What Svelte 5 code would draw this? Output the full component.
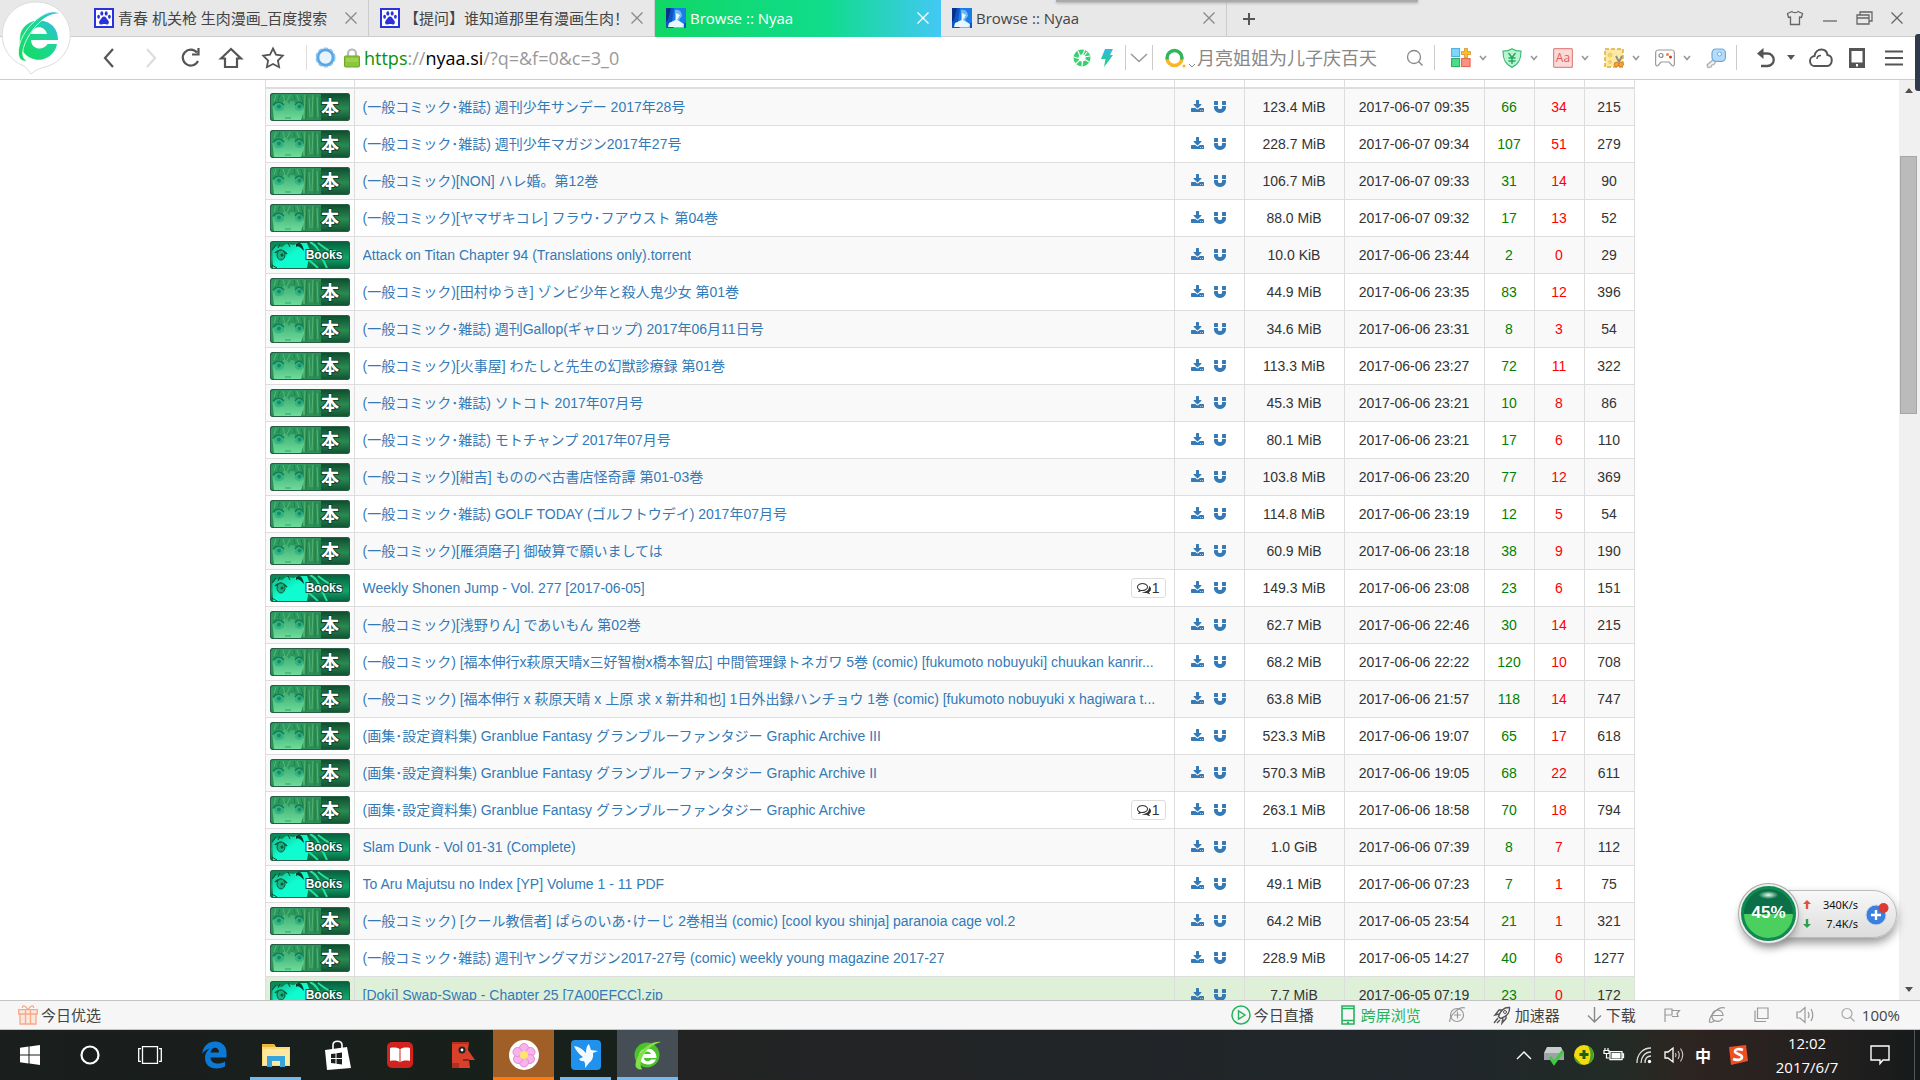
<script>
    // tabs along the top of the window
    const tabs = [
        { title: "青春 机关枪 生肉漫画_百度搜索", icon: "baidu" },
        { title: "【提问】谁知道那里有漫画生肉！", icon: "baidu" },
        { title: "Browse :: Nyaa", icon: "nyaa", active: true },
        { title: "Browse :: Nyaa", icon: "nyaa" },
    ];

    // [category, name, size, date, seeders, leechers, downloads, comments]
    const rows = [
        ["raw", "(一般コミック･雑誌) 週刊少年サンデー 2017年28号", "123.4 MiB", "2017-06-07 09:35", 66, 34, 215],
        ["raw", "(一般コミック･雑誌) 週刊少年マガジン2017年27号", "228.7 MiB", "2017-06-07 09:34", 107, 51, 279],
        ["raw", "(一般コミック)[NON] ハレ婚。第12巻", "106.7 MiB", "2017-06-07 09:33", 31, 14, 90],
        ["raw", "(一般コミック)[ヤマザキコレ] フラウ･フアウスト 第04巻", "88.0 MiB", "2017-06-07 09:32", 17, 13, 52],
        ["eng", "Attack on Titan Chapter 94 (Translations only).torrent", "10.0 KiB", "2017-06-06 23:44", 2, 0, 29],
        ["raw", "(一般コミック)[田村ゆうき] ゾンビ少年と殺人鬼少女 第01巻", "44.9 MiB", "2017-06-06 23:35", 83, 12, 396],
        ["raw", "(一般コミック･雑誌) 週刊Gallop(ギャロップ) 2017年06月11日号", "34.6 MiB", "2017-06-06 23:31", 8, 3, 54],
        ["raw", "(一般コミック)[火事屋] わたしと先生の幻獣診療録 第01巻", "113.3 MiB", "2017-06-06 23:27", 72, 11, 322],
        ["raw", "(一般コミック･雑誌) ソトコト 2017年07月号", "45.3 MiB", "2017-06-06 23:21", 10, 8, 86],
        ["raw", "(一般コミック･雑誌) モトチャンプ 2017年07月号", "80.1 MiB", "2017-06-06 23:21", 17, 6, 110],
        ["raw", "(一般コミック)[紺吉] もののべ古書店怪奇譚 第01-03巻", "103.8 MiB", "2017-06-06 23:20", 77, 12, 369],
        ["raw", "(一般コミック･雑誌) GOLF TODAY (ゴルフトウデイ) 2017年07月号", "114.8 MiB", "2017-06-06 23:19", 12, 5, 54],
        ["raw", "(一般コミック)[雁須磨子] 御破算で願いましては", "60.9 MiB", "2017-06-06 23:18", 38, 9, 190],
        ["eng", "Weekly Shonen Jump - Vol. 277 [2017-06-05]", "149.3 MiB", "2017-06-06 23:08", 23, 6, 151, 1],
        ["raw", "(一般コミック)[浅野りん] であいもん 第02巻", "62.7 MiB", "2017-06-06 22:46", 30, 14, 215],
        ["raw", "(一般コミック) [福本伸行x萩原天晴x三好智樹x橋本智広] 中間管理録トネガワ 5巻 (comic) [fukumoto nobuyuki] chuukan kanrir...", "68.2 MiB", "2017-06-06 22:22", 120, 10, 708],
        ["raw", "(一般コミック) [福本伸行 x 萩原天晴 x 上原 求 x 新井和也] 1日外出録ハンチョウ 1巻 (comic) [fukumoto nobuyuki x hagiwara t...", "63.8 MiB", "2017-06-06 21:57", 118, 14, 747],
        ["raw", "(画集･設定資料集) Granblue Fantasy グランブルーファンタジー Graphic Archive III", "523.3 MiB", "2017-06-06 19:07", 65, 17, 618],
        ["raw", "(画集･設定資料集) Granblue Fantasy グランブルーファンタジー Graphic Archive II", "570.3 MiB", "2017-06-06 19:05", 68, 22, 611],
        ["raw", "(画集･設定資料集) Granblue Fantasy グランブルーファンタジー Graphic Archive", "263.1 MiB", "2017-06-06 18:58", 70, 18, 794, 1],
        ["eng", "Slam Dunk - Vol 01-31 (Complete)", "1.0 GiB", "2017-06-06 07:39", 8, 7, 112],
        ["eng", "To Aru Majutsu no Index [YP] Volume 1 - 11 PDF", "49.1 MiB", "2017-06-06 07:23", 7, 1, 75],
        ["raw", "(一般コミック) [クール教信者] ぱらのいあ･けーじ 2巻相当 (comic) [cool kyou shinja] paranoia cage vol.2", "64.2 MiB", "2017-06-05 23:54", 21, 1, 321],
        ["raw", "(一般コミック･雑誌) 週刊ヤングマガジン2017-27号 (comic) weekly young magazine 2017-27", "228.9 MiB", "2017-06-05 14:27", 40, 6, 1277],
        ["eng", "[Doki] Swap-Swap - Chapter 25 [7A00EFCC].zip", "7.7 MiB", "2017-06-05 07:19", 23, 0, 172],
    ];

    let url = $state("https://nyaa.si/?q=&f=0&c=3_0");
    let keyword = $state("");
</script>

{#snippet favicon(name)}
    {#if name === "baidu"}
        <svg class="fav" viewBox="0 0 20 20">
            <rect x="1" y="1" width="18" height="18" fill="#fff" stroke="#2a32dc" stroke-width="2" />
            <g fill="#2a32dc">
                <ellipse cx="7.8" cy="5.4" rx="1.5" ry="2.2" />
                <ellipse cx="12.2" cy="5.4" rx="1.5" ry="2.2" />
                <ellipse cx="4.6" cy="8.8" rx="1.4" ry="2" />
                <ellipse cx="15.4" cy="8.8" rx="1.4" ry="2" />
                <path d="M10 8.5c2 0 2.400 2.200 3.800 3.400 1.800 1.600 1.400 4.600-1 4.600-1.200 0-1.800-.4-2.800-.4s-1.600.4-2.800.4c-2.400 0-2.800-3-1-4.600C7.600 10.700 8 8.500 10 8.500z" />
            </g>
        </svg>
    {:else}
        <svg class="fav" viewBox="0 0 20 20">
            <rect width="20" height="20" fill="#0c55c4" />
            <path d="M8 0h12v14l-5 3-3-5-6 2z" fill="#1b7be8" />
            <path d="M9 2c5-1 7 3 7 6l-3 4 5 5v3H8l-4-5 5-3z" fill="#6cbcf3" />
            <path d="M10 5l4 2-3 5 7 4-1 3H2l1-4 7-3z" fill="#e8f6ff" />
            <path d="M0 0h5L2 12 0 14z" fill="#06328c" />
        </svg>
    {/if}
{/snippet}

{#snippet cross()}
    <svg width="12" height="12" viewBox="0 0 12 12"><path d="M.5.5l11 11M11.500.5l-11 11" stroke="currentColor" fill="none" stroke-width="1.300" /></svg>
{/snippet}

{#snippet caret()}
    <svg width="8" height="6" viewBox="0 0 8 6"><path d="M1 1l3 3.500L7 1" fill="none" stroke="#999" stroke-width="1.600" /></svg>
{/snippet}

{#snippet banner(cat)}
    <svg class="banner" width="80" height="28" viewBox="0 0 80 28" role="img" aria-label="Literature">
        {#if cat === "raw"}
            <rect width="80" height="28" rx="3" fill="url(#rawBack)" />
            <path d="M1 1h50v26H1z" fill="#2c9159" />
            <path d="M2 10c6-3 26-3 30 0l2 8-3 9H4z" fill="url(#rawFace)" />
            <path d="M1 1h34l1 12-4-6-1 5-3-7-2 7-4-7-3 6-4-6-3 5-3-4-4 6-4 2z" fill="#2a9a60" />
            <path d="M35 2l-1 24M39 5l1 19M43 2l-1 22M47 4l1 20M33 14l1 12M6 2L4 8M13 2l2 7M20 2l-3 6M27 2l2 6" stroke="#78c878" fill="none" opacity=".6" />
            <path d="M37 2l-1 24M45 2v24M50 3v23M10 2l-2 5M24 2l1 5M31 2l2 8" stroke="#17733f" fill="none" opacity=".7" />
            <path d="M4 12q5-5 10 0v4q-5 4-9 1zM25 12q4-5 8 0v4q-4 4-8 0z" fill="#2eb183" opacity=".8" />
            <path d="M3 12q6-6 11 0M25 12q4-6 8 0" fill="none" stroke="#157a52" stroke-width="1.300" />
            <circle cx="9" cy="13.500" r="2" fill="#168c64" />
            <circle cx="29.500" cy="13.500" r="2" fill="#168c64" />
            <path d="M15 25h6" stroke="#2aa56b" />
            <text x="60" y="21" class="kanji" text-anchor="middle">本</text>
        {:else}
            <rect width="80" height="28" rx="3" fill="url(#engBack)" />
            <path d="M2 2h35l3 8-3 17H3z" fill="url(#engFace)" />
            <path d="M1 1h28l-5 3-8-1-4 3-6-1-5 6z" fill="#0a8a58" />
            <path d="M2 9l4-5M10 3l-2 4M18 2l2 4M2 24l5 3" stroke="#064b30" />
            <path d="M26 3q6-4 8 7l-3-3q-3-3-5-1z" fill="#063c28" />
            <path d="M5 12q6-6 12 1" fill="none" stroke="#07593a" stroke-width="1.500" />
            <ellipse cx="11" cy="14" rx="4" ry="5" fill="#19b083" stroke="#07593a" />
            <circle cx="12" cy="14" r="1.500" fill="#07593a" />
            <path d="M40 1c8 4 8 8 17 26M48 2c6 4 10 9 18 8M38 18l10 9" stroke="#27e0a0" stroke-width="2" fill="none" />
            <text x="54" y="18" class="books" text-anchor="middle">Books</text>
        {/if}
        <rect x=".5" y=".5" width="79" height="27" rx="3" fill="none" stroke="#2c5f48" />
    </svg>
{/snippet}

<svg class="defs" width="0" height="0">
    <defs>
        <linearGradient id="rawBack" x1="0" y1="0" x2="0" y2="1">
            <stop offset="0" stop-color="#0d4a2c" /><stop offset=".55" stop-color="#2a8a52" /><stop offset="1" stop-color="#0f5030" />
        </linearGradient>
        <linearGradient id="rawFace" x1="0" y1="0" x2="0" y2="1">
            <stop offset="0" stop-color="#3fae74" /><stop offset="1" stop-color="#6fdc9a" />
        </linearGradient>
        <linearGradient id="engBack" x1="0" y1="0" x2="0" y2="1">
            <stop offset="0" stop-color="#065c3c" /><stop offset=".6" stop-color="#10a568" /><stop offset="1" stop-color="#065c3c" />
        </linearGradient>
        <linearGradient id="engFace" x1="0" y1="0" x2="1" y2="1">
            <stop offset="0" stop-color="#14b985" /><stop offset=".5" stop-color="#0ffbd0" />
        </linearGradient>
        <linearGradient id="logo" x1="1" y1="0" x2="0" y2="1">
            <stop offset="0" stop-color="#36b5f0" /><stop offset=".35" stop-color="#1fd59a" /><stop offset="1" stop-color="#12dc5c" />
        </linearGradient>
        <linearGradient id="bolt" x1="0" y1="0" x2="0" y2="1">
            <stop offset="0" stop-color="#36b9e8" /><stop offset="1" stop-color="#18d46c" />
        </linearGradient>
        <linearGradient id="ring" x1="0" y1="0" x2="0" y2="1">
            <stop offset=".55" stop-color="#2fb65a" /><stop offset=".65" stop-color="#f8b62c" />
        </linearGradient>
    </defs>
</svg>

<div class="screen">
    <header class="tabbar">
        <nav class="tabs">
            {#each tabs as tab}
                <div class="tab" class:active={tab.active}>
                    {@render favicon(tab.icon)}
                    <span class="tab-title">{tab.title}</span>
                    <button class="close" aria-label="Close tab">{@render cross()}</button>
                </div>
            {/each}
            <button class="new-tab" aria-label="New tab">
                <svg width="14" height="14" viewBox="0 0 14 14"><path d="M7 1v12M1 7h12" stroke="#555" stroke-width="2" /></svg>
            </button>
        </nav>
        <div class="winbtns">
            <button aria-label="Skin"><svg width="18" height="16" viewBox="0 0 18 16"><path d="M6 1.500C7 3 11 3 12 1.500l4.500 2-1 4-2-.5V14.500h-9V7l-2 .5-1-4z" fill="none" stroke="#666" stroke-width="1.300" /></svg></button>
            <button aria-label="Minimize"><svg width="16" height="16" viewBox="0 0 16 16"><path d="M1 11h14" stroke="#666" stroke-width="1.300" /></svg></button>
            <button aria-label="Restore"><svg width="17" height="16" viewBox="0 0 17 16"><path d="M1 5h12v9H1zM1 8h12M4 5V2h12v9h-3" fill="none" stroke="#666" stroke-width="1.300" /></svg></button>
            <button aria-label="Close">{@render cross()}</button>
        </div>
    </header>

    <div class="logo">
        <svg width="68" height="74" viewBox="0 0 68 74">
            <path d="M34 1a33 33 0 0 1 6 65.500Q33 68 28 73q-4-6-7-8A33 33 0 0 1 34 1z" fill="#fff" stroke="#ddd" />
            <path d="M17 37a18 18 0 0 0 37 6h-9.500c-4 7-16 6-16.500-4h27C55 13 18 14 17 37zm11-4c2-9 14-9 16 0z" fill="url(#logo)" fill-rule="evenodd" />
            <path d="M57 13C46 4 20 25 16 46c-2 10 1 15 8 14-5-3-5-8-3-15C26 30 42 11 57 13z" fill="url(#logo)" stroke="#fff" stroke-width=".8" />
        </svg>
    </div>

    <div class="toolbar">
        <div class="nav">
            <button aria-label="Back"><svg width="20" height="22" viewBox="0 0 20 22"><path d="M14 2L6 11l8 9" fill="none" stroke="#555" stroke-width="2.200" /></svg></button>
            <button aria-label="Forward"><svg width="20" height="22" viewBox="0 0 20 22"><path d="M6 2l8 9-8 9" fill="none" stroke="#ddd" stroke-width="2.200" /></svg></button>
            <button aria-label="Reload"><svg width="24" height="22" viewBox="0 0 24 22"><path d="M18 5.500A8 8 0 1 0 19 14M19.500 1v6.500H13" fill="none" stroke="#555" stroke-width="2.200" /></svg></button>
            <button aria-label="Home"><svg width="24" height="22" viewBox="0 0 24 22"><path d="M2 11.500L12 2l10 9.500h-4V20H6v-8.500z" fill="none" stroke="#555" stroke-width="2.200" /></svg></button>
            <button aria-label="Bookmark"><svg width="24" height="22" viewBox="0 0 24 22"><path d="M12 1.500l3 6.200 6.800 1-4.900 4.800 1.200 6.700-6.100-3.200-6.100 3.200 1.200-6.700L2.200 8.700l6.800-1z" fill="none" stroke="#555" stroke-width="1.800" /></svg></button>
        </div>
        <i class="sep"></i>
        <form class="address">
            <svg width="21" height="21" viewBox="0 0 21 21"><circle cx="10.500" cy="10.500" r="7.700" fill="#e6f4fd" stroke="#5aa6e2" stroke-width="3" /><circle cx="10.500" cy="10.500" r="9.300" fill="none" stroke="#8cc6f2" stroke-width="1.500" stroke-dasharray="4 2" /></svg>
            <svg class="lock" width="16" height="20" viewBox="0 0 16 20"><path d="M4 9V5.500a4 4 0 0 1 8 0V9" fill="none" stroke="#b8b8b8" stroke-width="2.200" /><rect x=".5" y="8" width="15" height="11" rx="1" fill="#8cc63a" stroke="#6fa828" /><path d="M2 11h12M2 13h12" stroke="#aede66" /></svg>
            <label class="urlbox">
                <span class="url" aria-hidden="true"><b>https</b>://<em>nyaa.si</em>/?q=&amp;f=0&amp;c=3_0</span>
                <input class="url-input" aria-label="Address" bind:value={url} />
            </label>
            <svg class="aperture" width="18" height="18" viewBox="0 0 18 18"><circle cx="9" cy="9" r="6" fill="none" stroke="#3ccf70" stroke-width="5" /><path d="M5 2l2 5M12 .5L9.500 6M17 7l-6 1M16 13l-5-3M9 17.500L9.500 12M2.500 15L7 11M.5 8L6 9.500M14 3l-3 4" stroke="#fff" stroke-width="1.200" /><circle cx="9" cy="9" r="3.200" fill="#fff" /></svg>
            <svg width="12" height="18" viewBox="0 0 12 18"><path d="M4 0h8L9 6h3L3 18l1.500-8H0z" fill="url(#bolt)" /></svg>
        </form>
        <button class="drop" aria-label="History"><svg width="18" height="10" viewBox="0 0 18 10"><path d="M1 1l8 7.500L17 1" fill="none" stroke="#999" stroke-width="1.500" /></svg></button>
        <form class="search">
            <svg width="32" height="20" viewBox="0 0 32 20"><circle cx="9.500" cy="10" r="7.500" fill="none" stroke="url(#ring)" stroke-width="3.500" /><circle cx="19" cy="18" r="1.600" fill="#f8b62c" /><path d="M24 16l3 3 3-3" fill="none" stroke="#888" /></svg>
            <input aria-label="Search" placeholder="月亮姐姐为儿子庆百天" bind:value={keyword} />
            <svg width="18" height="18" viewBox="0 0 18 18"><circle cx="8" cy="8" r="6.500" fill="none" stroke="#888" stroke-width="1.300" /><path d="M12.500 12.500l4 4" stroke="#888" stroke-width="1.500" /></svg>
        </form>
        <div class="addons">
            <button aria-label="Extensions">
                <svg width="20" height="20" viewBox="0 0 20 20"><rect x=".6" y=".6" width="8" height="8" fill="#7fd6fb" stroke="#4aa9e0" /><rect x=".6" y="10.600" width="8" height="8" fill="#4fdc88" stroke="#21a85a" /><rect x="10.600" y="10.600" width="8.500" height="8" fill="#fb9180" stroke="#e3614f" /><path d="M13.500.5h3v3h3v3h-3v3h-3v-3h-3v-3h3z" fill="#fcc02e" stroke="#d98e1c" stroke-width=".8" /></svg>
                {@render caret()}
            </button>
            <button aria-label="Payment guard">
                <svg width="20" height="20" viewBox="0 0 20 20"><path d="M10 .7c3 2 6 2.500 9 2.500 0 8-2 13-9 16.200C3 16.200 1 11.200 1 3.200c3 0 6-.5 9-2.500z" fill="#b8f5cf" stroke="#3cba76" stroke-width="1.200" /><path d="M6.500 5l3.500 4.500L13.500 5M10 9.500V16M6.500 10h7M6.500 13h7" fill="none" stroke="#27a463" stroke-width="1.400" /></svg>
                {@render caret()}
            </button>
            <button aria-label="Translate">
                <svg width="20" height="20" viewBox="0 0 20 20"><rect x=".6" y=".6" width="18.800" height="18.800" rx="1" fill="#fdd8d4" stroke="#e08a86" stroke-width="1.200" /><text x="10" y="14" class="aa" text-anchor="middle">Aa</text></svg>
                {@render caret()}
            </button>
            <button aria-label="Screenshot">
                <svg width="20" height="20" viewBox="0 0 20 20"><rect x="1" y="1" width="18" height="18" fill="#fbe9a4" stroke="#e2ac38" stroke-width="1.500" stroke-dasharray="4 2" /><circle cx="6" cy="7" r="2.500" fill="#f3cf6a" /><circle cx="6" cy="14" r="2" fill="#f3cf6a" /><path d="M12 8l3 6M18 8l-3 6" stroke="#8f8a80" stroke-width="1.800" /><circle cx="12.500" cy="16.500" r="2.300" fill="#f7a23a" stroke="#d67f18" /><circle cx="17" cy="16.500" r="2.300" fill="#f7a23a" stroke="#d67f18" /></svg>
                {@render caret()}
            </button>
            <button aria-label="Games">
                <svg width="20" height="20" viewBox="0 0 20 20"><path d="M3 2h14q2 0 2.300 2l.1 12q-.2 2.500-2.400 1.500L14 14H6l-3 3.500Q.8 18.500.6 16L.7 4Q1 2 3 2z" fill="#fff" stroke="#9a9a9a" stroke-width="1.200" /><circle cx="6" cy="7.500" r="2" fill="none" stroke="#888" stroke-width="1.200" /><circle cx="12.500" cy="6.500" r="1.500" fill="#e8882a" /><circle cx="15.500" cy="9" r="1.500" fill="#d9382e" /></svg>
                {@render caret()}
            </button>
            <button class="last" aria-label="Password manager">
                <svg width="20" height="20" viewBox="0 0 20 20"><path d="M8 11l-7 6 1 2.500 3-.5 1-2 2-.5 2-3.500" fill="#eee" stroke="#aaa" stroke-width="1.200" /><rect x="6" y="1" width="13.400" height="12.400" rx="4" fill="#b4dcf8" stroke="#6fa9dc" stroke-width="1.200" /><circle cx="13.500" cy="6" r="2" fill="#fff" stroke="#6fa9dc" /></svg>
            </button>
        </div>
        <div class="tools">
            <button aria-label="Undo close"><svg width="18" height="20" viewBox="0 0 18 20"><path d="M4 5.500h6.500a6 6 0 0 1 0 12.500H4" fill="none" stroke="#555" stroke-width="2.300" /><path d="M0 5.500L6.500 0v11z" fill="#555" /></svg></button>
            <button aria-label="More closed tabs"><svg width="8" height="5" viewBox="0 0 8 5"><path d="M0 0h8L4 5z" fill="#555" /></svg></button>
            <button aria-label="Cloud"><svg width="24" height="20" viewBox="0 0 24 20"><path d="M6.500 18a5 5 0 0 1-1-10C6 4 9 1.500 12.500 1.500c3.500 0 5.500 2.500 6 5.500 6 .5 5.500 10.500-.5 11z" fill="none" stroke="#555" stroke-width="2" /><path d="M12 7.500c-2 0-4 1-4 3.500" fill="none" stroke="#555" stroke-width="1.500" /></svg></button>
            <button aria-label="Phone"><svg width="16" height="20" viewBox="0 0 16 20"><path d="M0 0h16v20H0zM2.500 3v11.500h11V3zM7 16v2.500h2V16z" fill="#555" fill-rule="evenodd" /></svg></button>
            <button aria-label="Menu"><svg width="18" height="16" viewBox="0 0 18 16"><path d="M0 1.500h18M0 8h18M0 14.500h18" stroke="#555" stroke-width="2.200" /></svg></button>
        </div>
    </div>

    <main class="page">
        <div class="view">
            <table>
                <colgroup>
                    <col class="c-cat" /><col /><col class="c-link" /><col class="c-size" /><col class="c-date" /><col class="c-num" /><col class="c-num" /><col class="c-num" />
                </colgroup>
                <thead>
                    <tr>{#each Array(8) as _}<th></th>{/each}</tr>
                </thead>
                <tbody>
                    {#each rows as [cat, name, size, date, seeders, leechers, downloads, comments], i}
                        <tr class:success={i === rows.length - 1}>
                            <td class="cat"><a href="#cat" aria-label="Category">{@render banner(cat)}</a></td>
                            <td class="name">
                                <div class="name-line">
                                    <a href="#view">{name}</a>
                                    {#if comments}
                                        <a class="comments" href="#comments">
                                            <svg width="14" height="14" viewBox="0 0 1792 1792"><path fill="#333" d="M704 384q-153 0-286 52t-211.500 141-78.500 191q0 82 53 158t149 132l97 56-35 84q34-20 62-39l44-31 53 10q78 14 153 14 153 0 286-52t211.500-141 78.500-191-78.500-191-211.500-141-286-52zm0-128q191 0 353.500 68.500t256.500 186.500 94 257-94 257-256.500 186.500-353.500 68.500q-86 0-176-16-124 88-278 128-36 9-86 16h-3q-11 0-20.500-8t-11.500-21q-1-3-1-6.500t.5-6.500 2-6l2.500-5 3.500-5.500 4-5 4.500-5 4-4.500q5-6 23-25t26-29.500 22.500-29 25-38.500 20.500-44q-124-72-195-177t-71-224q0-139 94-257t256.500-186.500 353.500-68.500zm822 1169q10 24 20.500 44t25 38.500 22.500 29 26 29.500 23 25q1 1 4 4.500t4.500 5 4 5 3.500 5.500l2.500 5 2 6 .5 6.500-1 6.500q-3 14-13 22t-22 7q-50-7-86-16-154-40-278-128-90 16-176 16-271 0-472-132 58 4 88 4 161 0 309-45t264-129q125-92 192-212t67-254q0-77-23-152 129 71 204 178t75 230q0 120-71 224.500t-195 176.500z" /></svg>{comments}
                                        </a>
                                    {/if}
                                </div>
                            </td>
                            <td>
                                <div class="links">
                                    <a href="#download" aria-label="Download"><svg width="14" height="14" viewBox="0 0 1792 1792"><path fill="currentColor" d="M1280 1344q0-26-19-45t-45-19-45 19-19 45 19 45 45 19 45-19 19-45zm256 0q0-26-19-45t-45-19-45 19-19 45 19 45 45 19 45-19 19-45zm128-224v320q0 40-28 68t-68 28h-1472q-40 0-68-28t-28-68v-320q0-40 28-68t68-28h465l135 136q58 56 136 56t136-56l136-136h464q40 0 68 28t28 68zm-325-569q17 41-14 70l-448 448q-18 19-45 19t-45-19l-448-448q-31-29-14-70 17-39 59-39h256v-448q0-26 19-45t45-19h256q26 0 45 19t19 45v448h256q42 0 59 39z" /></svg></a>
                                    <a href="#magnet" aria-label="Magnet"><svg width="14" height="14" viewBox="0 0 1792 1792"><path fill="currentColor" d="M1664 832v128q0 201-98.500 362t-274 251.500-395.500 90.500-395.500-90.500-274-251.500-98.500-362v-128q0-26 19-45t45-19h384q26 0 45 19t19 45v128q0 52 23.500 90t53.500 57 71 30 64 13 44 2 44-2 64-13 71-30 53.500-57 23.500-90v-128q0-26 19-45t45-19h384q26 0 45 19t19 45zm-1024-640v384q0 26-19 45t-45 19h-384q-26 0-45-19t-19-45v-384q0-26 19-45t45-19h384q26 0 45 19t19 45zm1024 0v384q0 26-19 45t-45 19h-384q-26 0-45-19t-19-45v-384q0-26 19-45t45-19h384q26 0 45 19t19 45z" /></svg></a>
                                </div>
                            </td>
                            <td>{size}</td>
                            <td>{date}</td>
                            <td class="seed">{seeders}</td>
                            <td class="leech">{leechers}</td>
                            <td>{downloads}</td>
                        </tr>
                    {/each}
                </tbody>
            </table>
        </div>
        <div class="scrollbar">
            <svg width="8" height="5" viewBox="0 0 8 5"><path d="M0 5h8L4 0z" fill="#505050" /></svg>
            <div class="track"><div class="thumb"></div></div>
            <svg width="8" height="5" viewBox="0 0 8 5"><path d="M0 0h8L4 5z" fill="#505050" /></svg>
        </div>
    </main>

    <footer class="status">
        <button class="gift">
            <svg width="20" height="20" viewBox="0 0 20 20"><path d="M2 9v10h16V9M.7 4.700h18.600V9H.7zM7.500 5v14M12.500 5v14" fill="#fde6da" stroke="#f6a98a" stroke-width="1.300" /><path d="M10 4.500C7 0 4 0 4.500 3M10 4.500C13 0 16 0 15.500 3" fill="none" stroke="#f6a98a" stroke-width="1.300" /></svg>
            今日优选
        </button>
        <div class="status-right">
            <button class="live"><svg width="20" height="20" viewBox="0 0 20 20"><circle cx="10" cy="10" r="9" fill="none" stroke="#25b45e" stroke-width="1.500" /><path d="M7.500 5.800l6.500 4.200-6.500 4.200z" fill="none" stroke="#25b45e" stroke-width="1.400" /></svg>今日直播</button>
            <button class="cross-screen"><svg width="14" height="20" viewBox="0 0 14 20"><path d="M1 1h12v18H1zM1 3.500h12M1 15.500h12M6 17.500h2" fill="none" stroke="#25b45e" stroke-width="1.600" /></svg>跨屏浏览</button>
            <button aria-label="Compatibility"><svg width="18" height="18" viewBox="0 0 18 18"><circle cx="9" cy="9" r="6.500" fill="none" stroke="#999" stroke-width="1.200" /><path d="M17 2C11 0 2 9 1.500 16M9.500 5.500v7M6 9h7" fill="none" stroke="#999" stroke-width="1.200" /></svg></button>
            <button><svg width="18" height="18" viewBox="0 0 18 18"><path d="M16.500 1.500C10 1 7 6 5.500 10.500l2 2C12 11 17 8 16.500 1.500zM6 8L2 9l4-5h3M10 12l-1 5 4-4.500V9M5 12l-4 5M7 14l-3 3" fill="none" stroke="#555" stroke-width="1.400" /><circle cx="12" cy="6" r="1.500" fill="none" stroke="#555" /></svg>加速器</button>
            <button><svg width="15" height="18" viewBox="0 0 15 18"><path d="M7.500 1v15M1 9.500l6.500 6.500L14 9.500" fill="none" stroke="#888" stroke-width="1.400" /></svg>下载</button>
            <button aria-label="Flag"><svg width="18" height="18" viewBox="0 0 18 18"><path d="M2 16V3h7v6H2M9 4.500h7.500L14 7.500l1 3H9" fill="none" stroke="#999" stroke-width="1.200" /></svg></button>
            <button aria-label="Engine"><svg width="18" height="18" viewBox="0 0 18 18"><path d="M4.500 9.500H15C15 2 4 2.500 4 10c0 6 8 7 10.500 2.500M17 2C10 0 1 10 1.500 16c2 1 4-.5 5-1" fill="none" stroke="#999" stroke-width="1.200" /></svg></button>
            <button aria-label="Side by side"><svg width="16" height="16" viewBox="0 0 16 16"><path d="M4.500 1h10.500v10.500H4.500zM2 3.500v11h11" fill="none" stroke="#999" stroke-width="1.200" /></svg></button>
            <button aria-label="Mute"><svg width="18" height="18" viewBox="0 0 18 18"><path d="M1 6h3l5-4.500v15L4 12H1zM12 6q2 3 0 6M15 3q3.500 6 0 12" fill="none" stroke="#999" stroke-width="1.200" /></svg></button>
            <button class="zoom"><svg width="14" height="16" viewBox="0 0 14 16"><circle cx="6" cy="6.500" r="5" fill="none" stroke="#aaa" stroke-width="1.200" /><path d="M9.500 10.500l4 4" stroke="#aaa" stroke-width="1.200" /></svg>100%</button>
        </div>
    </footer>

    <div class="taskbar">
        <button class="sys" aria-label="Start"><svg width="20" height="20" viewBox="0 0 20 20"><path d="M0 2.800l8.500-1.200v7.900H0zM9.500 1.500L20 0v9.500H9.500zM0 10.500h8.500v7.900L0 17.200zM9.500 10.500H20V20L9.500 18.500z" fill="#fff" /></svg></button>
        <button class="sys" aria-label="Cortana"><svg width="20" height="20" viewBox="0 0 20 20"><circle cx="10" cy="10" r="8.500" fill="none" stroke="#fff" stroke-width="2.200" /></svg></button>
        <button class="sys" aria-label="Task view"><svg width="24" height="18" viewBox="0 0 24 18"><path d="M4.500 .7h15v16.600h-15zM3 2.700H.7v12.600H3M21 2.700h2.300v12.600H21" fill="none" stroke="#fff" stroke-width="1.300" /></svg></button>
        <div class="apps">
            <button aria-label="Edge"><svg width="26" height="28" viewBox="0 0 26 28"><path d="M1 13C2.500 4 8 .5 14 .5c8 0 12 6 11.500 12v4H9.500c.5 7 9 7.500 14.500 4v5c-8 4-20 2.500-20-9 0-4 2-7 5-9-4 1-6.500 3-8 5.500zM9.600 11.500H18c0-6.500-8-6-8.400 0z" fill="#0a7ad6" fill-rule="evenodd" /></svg></button>
            <button class="open" aria-label="Explorer"><svg width="28" height="24" viewBox="0 0 28 24"><path d="M0 1h12l2 3h14v19H0z" fill="#fcd975" /><path d="M0 1h12l1 3H0z" fill="#e8b83a" /><path d="M1 6h26v16H1z" fill="#ffe9a0" /><path d="M5 24V13h18v11h-5v-6h-8v6z" fill="#38a4dc" /></svg></button>
            <button aria-label="Store"><svg width="26" height="30" viewBox="0 0 26 30"><path d="M8 9V5c0-5 9-5 9 0v4" fill="none" stroke="#fff" stroke-width="1.600" /><path d="M0 10l22-3 4 21-24 2z" fill="#fff" /><path d="M6 14l4.500-.6V18H6zM11.500 13.300L17 12.500V18h-5.500zM6 19h4.500v4.600L6 23zM11.500 19H17v5.500l-5.500-.8z" fill="#1b1f1d" /></svg></button>
            <button aria-label="Dictionary"><svg width="26" height="26" viewBox="0 0 26 26"><rect width="26" height="26" rx="5" fill="#d3231f" /><path d="M3 6c4-1 8-.5 10 1.500C15 5.500 19 5 23 6v13c-4-1-8-.5-10 1.500C11 18.500 7 18 3 19z" fill="#fff" /><path d="M13 7.500v13" stroke="#d3231f" /></svg></button>
            <button aria-label="Reader"><svg width="26" height="28" viewBox="0 0 26 28"><path d="M3 1h17l-1 8 7 10h-6l1 8H3z" fill="#d9402a" /><path d="M3 1h17v2H3zM3 22h7v5H3z" fill="#b32f1e" /><circle cx="13" cy="9" r="3.500" fill="#222" /><circle cx="13" cy="9" r="1.400" fill="#fff" /><path d="M14 19h6" stroke="#7d1a10" stroke-width="1.500" /></svg></button>
            <button class="alert" aria-label="Flower"><svg width="30" height="30" viewBox="0 0 30 30"><circle cx="15" cy="15" r="15" fill="#fff" /><g fill="#f7b4ea" stroke="#e58bd8"><circle cx="15" cy="8" r="4.500" /><circle cx="21.500" cy="12" r="4.500" /><circle cx="21" cy="19" r="4.500" /><circle cx="15" cy="22.500" r="4.500" /><circle cx="9" cy="19" r="4.500" /><circle cx="8.500" cy="12" r="4.500" /></g><circle cx="15" cy="15" r="4" fill="#ffe36a" /></svg></button>
            <button class="open" aria-label="Thunder"><svg width="30" height="30" viewBox="0 0 30 30"><rect width="30" height="30" rx="4" fill="#2191ee" /><path d="M3 6q7 1 12 7 0-7 3-9l2 6 7 1-5 2q1 6-4 10l-4 5q1-4-1-7-3 1-5-2l4-2Q6 13 3 6z" fill="#f2faff" /></svg></button>
            <button class="open current" aria-label="360 browser"><svg width="30" height="30" viewBox="0 0 30 30"><circle cx="14" cy="15" r="12.500" fill="#4cc22a" /><path d="M6 16.500a9 9 0 0 0 17 3h-5c-2 3-7 2-7-1.500h12.500C24 6 6 5 6 16.500zM11 14c1-3.500 6-3.500 7 0z" fill="#fff" fill-rule="evenodd" /><path d="M28 2C18 0 3 12 2.500 26c1 3 4 4 7 3C5 26 8 8 28 2z" fill="#82e04c" /></svg></button>
        </div>
        <div class="tray">
            <button aria-label="Show hidden icons"><svg width="16" height="10" viewBox="0 0 16 10"><path d="M1 9l7-7 7 7" fill="none" stroke="#fff" stroke-width="1.400" /></svg></button>
            <button aria-label="Drive"><svg width="20" height="20" viewBox="0 0 20 20"><path d="M3 2h14l3 6v7H0V8z" fill="#c9cdd0" /><path d="M0 8h20v7H0z" fill="#9da3a7" /><path d="M6 12l4 6L19 6" fill="none" stroke="#43c843" stroke-width="3.200" /></svg></button>
            <button aria-label="Safeguard"><svg width="20" height="20" viewBox="0 0 20 20"><circle cx="10" cy="10" r="10" fill="#f5d90f" /><path d="M14 1a10 10 0 0 1 0 18q5-9 0-18zM0 11q5 6 8 9-7-1-8-9z" fill="#3fa324" /><path d="M10 5v9M5.500 9.500h9" stroke="#1e5e1a" stroke-width="3" /></svg></button>
            <button aria-label="Battery"><svg width="20" height="16" viewBox="0 0 20 16"><path d="M6 4.700h12v8H6zM18 7h1.500v3.500H18" fill="none" stroke="#fff" stroke-width="1.300" /><path d="M7.500 6h9v5.500h-9z" fill="#fff" /><path d="M1 1v2M4 1v2M0 3.500h5v3H0zM2.500 6v5h3" fill="none" stroke="#fff" stroke-width="1.200" /></svg></button>
            <button aria-label="Network"><svg width="18" height="18" viewBox="0 0 18 18"><path d="M2 17C2 8 8 2 16 2M6 17c0-6 4-11 10-11M10 17c0-4 2-7 6-7" fill="none" stroke="#ddd" stroke-width="1.300" /><circle cx="14.500" cy="15.500" r="1.700" fill="#fff" /></svg></button>
            <button aria-label="Volume"><svg width="20" height="18" viewBox="0 0 20 18"><path d="M1 6h3l5-4v14l-5-4H1z" fill="none" stroke="#fff" stroke-width="1.300" /><path d="M11.500 7q1 2 0 4M14 5q2.500 4 0 8M16.500 2.500q4.500 6.500 0 13" fill="none" stroke="#ccc" stroke-width="1.100" /></svg></button>
            <button class="ime">中</button>
            <button class="sogou" aria-label="Sogou"><svg width="20" height="20" viewBox="0 0 20 20"><path d="M1 2l17-2 2 16-17 4z" fill="#ee4f23" /><path d="M15 5c-4-1.500-8-1-8 1.500S14 9 14 12s-5 3.500-9 2" fill="none" stroke="#fff" stroke-width="2.600" /></svg></button>
            <button class="clock"><span>12:02</span><span>2017/6/7</span></button>
            <button class="notify" aria-label="Notifications"><svg width="20" height="20" viewBox="0 0 20 20"><path d="M1 1h18v14h-6l-3 3.500V15H1z" fill="none" stroke="#fff" stroke-width="1.400" /></svg></button>
        </div>
    </div>

    <!-- things floating over the window -->
    <div class="dock-shadow"></div>
    <div class="edge-tag"></div>
    <div class="speed">
        <div class="rates">
            <p><svg width="8" height="9" viewBox="0 0 8 9"><path d="M4 0l4 4H5.200v5H2.800V4H0z" fill="#e0523c" /></svg>340K/s</p>
            <p><svg width="8" height="9" viewBox="0 0 8 9"><path d="M4 9L0 5h2.800V0h2.400v5H8z" fill="#2fa052" /></svg>7.4K/s</p>
        </div>
        <button class="boost" aria-label="Speed up"><svg width="26" height="26" viewBox="0 0 26 26"><circle cx="11" cy="14" r="10" fill="#3a80dc" stroke="#c9d6e6" /><path d="M11 9v10M6 14h10" stroke="#fff" stroke-width="2.400" /><circle cx="18.500" cy="7" r="5" fill="#dc3a34" /></svg></button>
        <div class="ball">45%</div>
    </div>
</div>

<style>
    :global(body) {
        margin: 0;
        background: #fff;
    }

    .screen {
        position: relative;
        display: flex;
        flex-direction: column;
        height: 100vh;
        overflow: hidden;
        font-family: "Open Sans", "Noto Sans CJK SC", sans-serif;
        font-size: 15px;
        color: #444;
    }
    .defs {
        position: absolute;
    }
    svg {
        display: block;
        flex: none;
        overflow: visible;
    }
    button {
        display: flex;
        align-items: center;
        justify-content: center;
        margin: 0;
        padding: 0;
        border: 0;
        background: none;
        font: inherit;
        color: inherit;
        white-space: nowrap;
    }
    input {
        min-width: 0;
        padding: 0;
        border: 0;
        outline: 0;
        background: none;
        font: inherit;
    }

    /* tab strip */
    .tabbar {
        display: flex;
        justify-content: space-between;
        flex: none;
        height: 36px;
        padding-left: 83px;
        background: #e8e8e8;
        border-bottom: 1px solid #ccc;
    }
    .tabs {
        display: flex;
        height: 37px;
    }
    .tab {
        box-sizing: border-box;
        display: flex;
        align-items: center;
        width: 286px;
        padding: 0 11px 2px;
        border-right: 1px solid #ccc;
    }
    .tab.active {
        border-right-color: transparent;
        background: linear-gradient(90deg, #10d765 0%, #10dc8c 60%, #43c8f5 100%) border-box;
        color: #fff;
    }
    .fav {
        width: 20px;
        height: 20px;
    }
    .tab-title {
        flex: 1;
        margin-left: 4px;
        overflow: hidden;
        white-space: nowrap;
    }
    .close {
        color: #888;
    }
    .active .close {
        color: #fff;
    }
    .new-tab {
        width: 43px;
    }
    .winbtns {
        display: flex;
        gap: 18px;
        padding-right: 17px;
        color: #666;
    }

    .logo {
        position: absolute;
        top: 1px;
        left: 3px;
    }

    /* address bar */
    .toolbar {
        display: flex;
        align-items: center;
        flex: none;
        height: 41px;
        padding: 0 0 1px 88px;
        background: #fff;
        border-bottom: 1px solid #ccc;
    }
    .nav {
        display: flex;
    }
    .nav button {
        width: 42px;
    }
    .nav button:nth-child(3) {
        width: 38px;
    }
    .sep {
        width: 1px;
        height: 25px;
        margin: 0 8px 0 12px;
        background: #ddd;
    }
    .address {
        display: flex;
        align-items: center;
        flex: 1;
        font-size: 18px;
    }
    .lock {
        margin: 0 4px 0 8px;
    }
    .urlbox {
        position: relative;
        flex: 1;
        line-height: 24px;
    }
    .url {
        color: #999;
    }
    .url b {
        font-weight: 400;
        color: #0a8f0a;
    }
    .url em {
        font-style: normal;
        color: #000;
    }
    .url-input {
        position: absolute;
        inset: 0;
        width: 100%;
        color: transparent;
    }
    .aperture {
        margin-right: 10px;
    }
    .drop {
        width: 28px;
        height: 25px;
        margin-left: 12px;
        border: solid #ccc;
        border-width: 0 1px;
    }
    .search {
        box-sizing: border-box;
        display: flex;
        align-items: center;
        width: 282px;
        height: 25px;
        padding: 0 10px 0 12px;
        border-right: 1px solid #ccc;
        font-size: 18px;
    }
    .search input {
        flex: 1;
    }
    .search input::placeholder {
        color: #888;
    }
    .addons {
        display: flex;
        padding: 3px 10px 2px 16px;
        border-right: 1px solid #ccc;
    }
    .addons button {
        justify-content: flex-start;
        gap: 8px;
        width: 51px;
    }
    .addons .last {
        width: 20px;
    }
    .aa {
        font: 12px "Open Sans", sans-serif;
        fill: #d9605c;
    }
    .tools {
        display: flex;
        gap: 16px;
        padding: 0 17px 0 20px;
    }
    .tools button:nth-child(2) {
        margin: 0 -2px 0 -4px;
    }
    .tools button:last-child {
        margin-left: 4px;
    }

    /* torrent list */
    .page {
        display: flex;
        flex: 1;
        min-height: 0;
        background: #fff;
    }
    .view {
        flex: 1;
        overflow: hidden;
        font: 14px/20px "Liberation Sans", "Noto Sans CJK JP", sans-serif;
        color: #333;
    }
    table {
        width: 1370px;
        max-width: 100%;
        margin: 0 auto;
        table-layout: fixed;
        border-collapse: collapse;
    }
    .c-cat { width: 89px; }
    .c-link { width: 70px; }
    .c-size { width: 100px; }
    .c-date { width: 140px; }
    .c-num { width: 50px; }
    th {
        height: 7px;
        padding: 0;
        border: solid #ddd;
        border-width: 0 1px 2px;
    }
    td {
        height: 20px;
        padding: 8px 0;
        border: 1px solid #ddd;
        text-align: center;
        white-space: nowrap;
    }
    tbody tr:nth-child(odd) {
        background: #f9f9f9;
    }
    tbody tr.success {
        background: #dff0d8;
    }
    td a {
        color: #337ab7;
        text-decoration: none;
    }
    .cat {
        padding: 4px;
    }
    .name {
        padding: 8px;
        text-align: left;
    }
    .name-line {
        display: flex;
        align-items: center;
        justify-content: space-between;
        height: 20px;
    }
    .name-line a:first-child {
        overflow: hidden;
        text-overflow: ellipsis;
    }
    .name-line .comments {
        display: flex;
        align-items: center;
        gap: 1px;
        height: 18px;
        padding: 0 5px;
        border: 1px solid #ddd;
        border-radius: 3px;
        background: #fff;
        color: #333;
    }
    .links {
        display: flex;
        justify-content: center;
        gap: 8px;
    }
    .seed {
        color: green;
    }
    .leech {
        color: red;
    }
    .kanji {
        font: bold 18px "Noto Sans CJK JP", sans-serif;
        fill: #fff;
        stroke: #14432b;
        stroke-width: 2px;
        paint-order: stroke;
    }
    .books {
        font: bold 12px "Liberation Sans", sans-serif;
        fill: #fff;
        stroke: #0c4d38;
        stroke-width: 2px;
        paint-order: stroke;
    }

    .scrollbar {
        display: flex;
        flex-direction: column;
        align-items: center;
        width: 21px;
        padding: 8px 2px 8px 0;
        box-sizing: border-box;
        background: #f0f0f0;
    }
    .track {
        flex: 1;
        width: 17px;
        padding: 63px 0 0;
    }
    .thumb {
        box-sizing: border-box;
        height: 31%;
        border: 1px solid #a6a6a6;
        background: #bbb;
    }

    /* browser status bar */
    .status {
        display: flex;
        align-items: center;
        justify-content: space-between;
        flex: none;
        height: 28px;
        padding: 0 20px 0 18px;
        background: #f6f6f6;
        border: solid #c4c4c4;
        border-width: 1px 0;
    }
    .status button {
        line-height: 20px;
    }
    .gift,
    .live {
        gap: 3px;
    }
    .status-right {
        display: flex;
        align-items: center;
        gap: 27px;
    }
    .status-right button {
        gap: 4px;
    }
    .status-right .live {
        gap: 3px;
    }
    .status-right .zoom {
        gap: 7px;
    }
    .status-right .cross-screen {
        gap: 6px;
        color: #25b45e;
    }

    /* windows taskbar */
    .taskbar {
        display: flex;
        flex: none;
        height: 50px;
        background: linear-gradient(90deg, #1a1e1d 0%, #17201b 32%, #232323 36%, #20262b 75%, #222b26 84%, #2e2420 88%, #221f1f 96%, #161a1a 100%);
        color: #fff;
    }
    .sys {
        width: 60px;
    }
    .apps {
        display: flex;
        flex: 1;
        gap: 1px;
        margin-left: 3px;
    }
    .apps button {
        box-sizing: border-box;
        width: 61px;
        border-top: 3px solid transparent;
        border-bottom: 3px solid transparent;
    }
    .apps .open {
        background: linear-gradient(#76b9ed, #76b9ed) bottom / 51px 3px no-repeat border-box;
    }
    .apps .alert {
        background: #a15f28;
        border-color: #a15f28 transparent #ff7a0a;
    }
    .apps .current {
        background: #454d55;
        border-color: #454d55 transparent #76b9ed;
    }
    .tray {
        display: flex;
    }
    .tray button {
        width: 30px;
    }
    .tray .ime {
        width: 28px;
        font-size: 16px;
        font-weight: 700;
    }
    .tray .sogou {
        width: 42px;
    }
    .tray .clock {
        flex-direction: column;
        width: 96px;
        line-height: 24px;
    }
    .tray .notify {
        width: 60px;
        margin-right: 5px;
        padding-right: 10px;
        border-right: 1px solid #555;
    }

    .dock-shadow {
        position: absolute;
        top: 0;
        left: 55%;
        width: 362px;
        height: 2px;
        background: #aaa;
        box-shadow: 0 1px 3px #999;
    }
    .edge-tag {
        position: absolute;
        top: 34px;
        right: 0;
        width: 5px;
        height: 57px;
        border-radius: 3px 0 0 3px;
        background: #2f3b4c;
    }

    /* network speed widget */
    .speed {
        position: absolute;
        right: 23px;
        bottom: 142px;
        display: flex;
        align-items: center;
        box-sizing: border-box;
        width: 144px;
        height: 48px;
        padding-left: 49px;
        border: 1px solid #bbb;
        border-radius: 24px;
        background: linear-gradient(#f8f8f8, #dcdcdc);
        box-shadow: 0 5px 10px #999;
    }
    .rates {
        width: 55px;
        font: 11px/19px "Noto Sans", sans-serif;
        color: #111;
    }
    .rates p {
        display: flex;
        align-items: center;
        justify-content: space-between;
        margin: 0;
    }
    .boost {
        margin-left: 7px;
    }
    .ball {
        position: absolute;
        left: -13px;
        top: -5px;
        width: 49px;
        height: 49px;
        border: 3px solid #0f8a50;
        border-radius: 50%;
        background: radial-gradient(ellipse 10px 4px at 50% 6px, #e8fff4, transparent), linear-gradient(#0b7048 0 52%, #4bd060 52%);
        box-shadow: 0 0 0 2px #eee, 0 0 0 3px #aaa, 0 6px 10px #888;
        font: bold 17px/48px "Liberation Sans", sans-serif;
        text-align: center;
        color: #fff;
    }
</style>
